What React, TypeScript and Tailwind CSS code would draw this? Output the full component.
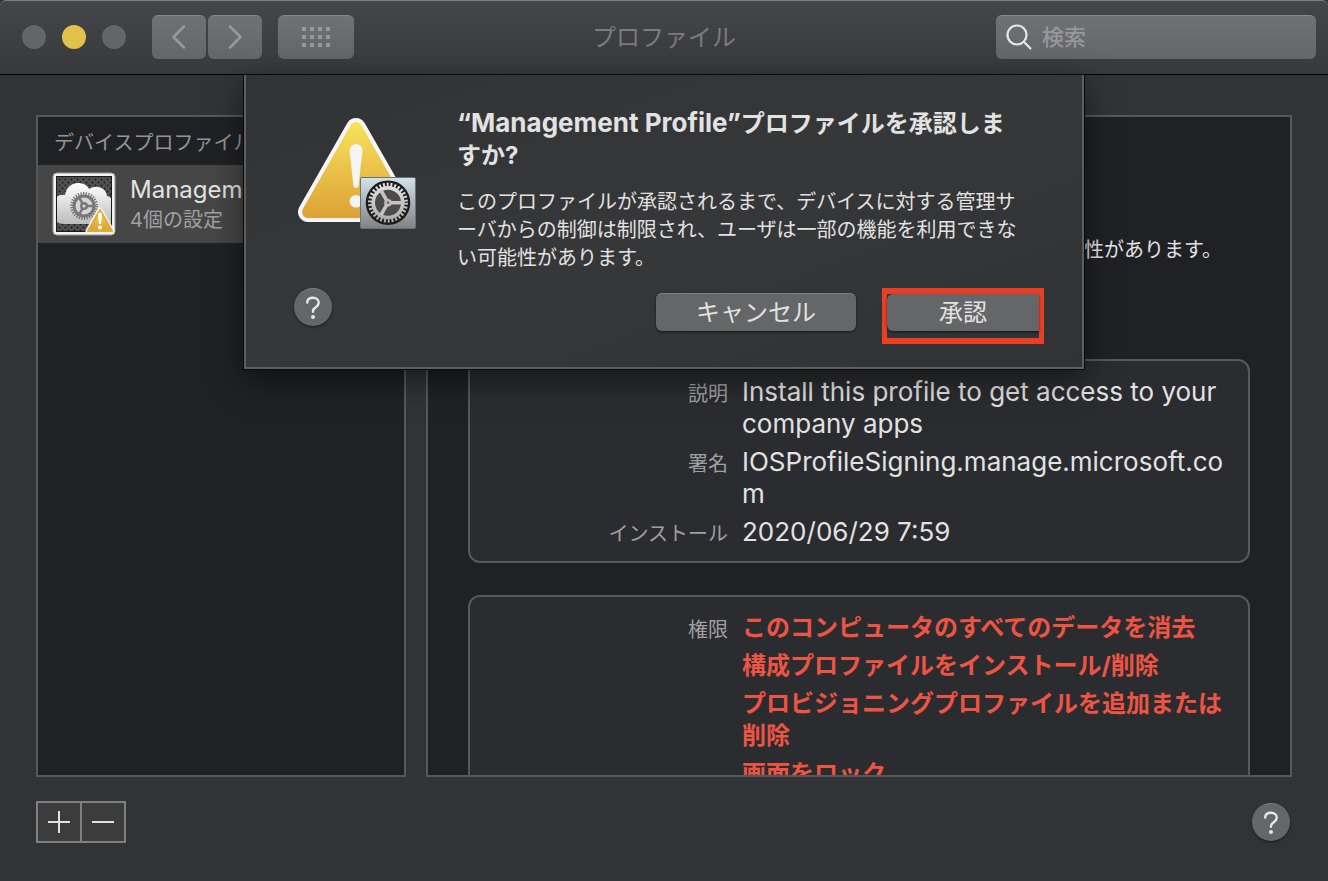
import { useState } from "react";

interface IDetailRow {
  label: string;
  value: string;
}

const profileInfo: IDetailRow[] = [
  { label: "説明", value: "Install this profile to get access to your company apps" },
  { label: "署名", value: "IOSProfileSigning.manage.microsoft.com" },
  { label: "インストール", value: "2020/06/29 7:59" },
];

const rights = [
  "このコンピュータのすべてのデータを消去",
  "構成プロファイルをインストール/削除",
  "プロビジョニングプロファイルを追加または削除",
  "画面をロック",
];

const toolButton =
  "flex h-11 items-center justify-center rounded-md border-t border-[#86888b] bg-gradient-to-b from-[#707175] to-[#656669] text-[#97989b]";

function NavButtons() {
  return (
    <div className="flex gap-4">
      <div className="flex gap-0.5">
        <button type="button" aria-label="戻る" className={`${toolButton} w-[54px]`}>
          <svg width="16" height="26" viewBox="0 0 16 26" fill="none" stroke="currentColor" strokeWidth="2.600" strokeLinecap="round" strokeLinejoin="round">
            <path d="M13 2.500 2.500 13 13 23.500" />
          </svg>
        </button>
        <button type="button" aria-label="進む" className={`${toolButton} w-[54px]`}>
          <svg width="16" height="26" viewBox="0 0 16 26" fill="none" stroke="currentColor" strokeWidth="2.600" strokeLinecap="round" strokeLinejoin="round">
            <path d="M3 2.500 13.500 13 3 23.500" />
          </svg>
        </button>
      </div>
      <button type="button" aria-label="すべてを表示" className={`${toolButton} w-[76px]`}>
        <svg width="28" height="20" viewBox="0 0 28 20" fill="currentColor">
          {[0, 8, 16].map((y) => [0, 8, 16, 24].map((x) => <rect key={`${x}-${y}`} x={x} y={y} width="4" height="4" />))}
        </svg>
      </button>
    </div>
  );
}

function HelpButton() {
  return (
    <button
      type="button"
      aria-label="ヘルプ"
      className="flex size-[38px] items-center justify-center rounded-full border-t border-[#7d7e80] bg-[#656668] text-[#e6e6e6] shadow-sm shadow-black/40"
    >
      <svg width="16" height="24" viewBox="0 0 16 24" fill="none" stroke="currentColor" strokeWidth="2.400" strokeLinecap="round">
        <path d="M2.200 6.600C2.300 3.700 4.600 1.800 8 1.800c3.400 0 5.700 1.900 5.700 4.800 0 2.300-1.200 3.500-3 4.700C8.800 12.500 8 13.400 8 15.200v.6" />
        <circle cx="8" cy="21" r="2" fill="currentColor" stroke="none" />
      </svg>
    </button>
  );
}

function ProfileIcon() {
  return (
    <svg width="64" height="64" viewBox="0 0 64 64" className="shrink-0">
      <defs>
        <linearGradient id="cloud" x1="0" y1="0" x2="0" y2="1">
          <stop offset="0" stopColor="#ffffff" />
          <stop offset="1" stopColor="#bdbdbd" />
        </linearGradient>
        <linearGradient id="smallWarn" x1="0" y1="0" x2="0" y2="1">
          <stop offset="0" stopColor="#f6d75a" />
          <stop offset="1" stopColor="#dba030" />
        </linearGradient>
        <pattern id="dots" width="6" height="6" patternUnits="userSpaceOnUse">
          <rect width="6" height="6" fill="#505050" />
          <circle cx="1.500" cy="1.500" r="1" fill="#1c1c1c" />
          <circle cx="4.500" cy="4.500" r="1" fill="#1c1c1c" />
        </pattern>
        <clipPath id="frame">
          <rect x="5" y="5" width="54" height="54" />
        </clipPath>
      </defs>
      <rect x="1" y="1" width="62" height="62" rx="4" fill="#f1f1f1" stroke="#9a9a9a" strokeWidth="1" />
      <rect x="4.500" y="4.500" width="55" height="55" fill="url(#dots)" stroke="#1a1a1a" strokeWidth="1" />
      <g clipPath="url(#frame)">
        <path
          d="M3 27c3-4 6-5 10-4 1-7 6-12 13-12 5 0 9 2 11 6 8-5 17-1 18 7 4 1 6 4 7 8v18c-3 2-7 2-10 2H12c-5 0-9-2-9-6z"
          fill="url(#cloud)"
        />
      </g>
      <circle cx="32" cy="34" r="12.500" fill="none" stroke="#777" strokeWidth="3" strokeDasharray="1.300 1.318" />
      <circle cx="32" cy="34" r="10" fill="#d5d5d5" stroke="#777" strokeWidth="3" />
      <path d="M32 34h10M32 34l-5-8.700M32 34l-5 8.700" stroke="#777" strokeWidth="2.500" />
      <circle cx="32" cy="34" r="4" fill="#777" />
      <circle cx="32" cy="34" r="1.500" fill="#ddd" />
      <path d="M48 38 36 59h24z" fill="#f3f3f3" stroke="#f3f3f3" strokeWidth="5" strokeLinejoin="round" />
      <path d="M48 38 36 59h24z" fill="url(#smallWarn)" stroke="#e0ab38" strokeWidth="2" strokeLinejoin="round" />
      <path d="M46 42.500a2 2 0 0 1 4 0l-1 9.500h-2z" fill="#fff" />
      <circle cx="48" cy="55.500" r="2" fill="#fff" />
    </svg>
  );
}

function WarningIcon() {
  return (
    <svg width="124" height="116" viewBox="0 0 124 116" className="shrink-0">
      <defs>
        <linearGradient id="warn" gradientUnits="userSpaceOnUse" x1="0" y1="6" x2="0" y2="102">
          <stop offset="0" stopColor="#f7e35c" />
          <stop offset="1" stopColor="#dca136" />
        </linearGradient>
        <linearGradient id="plate" x1="0" y1="0" x2="0" y2="1">
          <stop offset="0" stopColor="#d3e2ea" />
          <stop offset="1" stopColor="#7f8284" />
        </linearGradient>
        <linearGradient id="metal" gradientUnits="userSpaceOnUse" x1="0" y1="66" x2="0" y2="108">
          <stop offset="0" stopColor="#e4e4e0" />
          <stop offset="1" stopColor="#a9a8a4" />
        </linearGradient>
      </defs>
      <path d="M62 12 14 96h96z" fill="#f5f5f5" stroke="#f5f5f5" strokeWidth="20" strokeLinejoin="round" />
      <path d="M62 12 14 96h96z" fill="url(#warn)" stroke="url(#warn)" strokeWidth="12" strokeLinejoin="round" />
      <path d="M55.500 34.500a6.500 6.500 0 0 1 13 0L64.500 70q-.5 2-2.500 2t-2.500-2z" fill="#f5f5f5" />
      <circle cx="62" cy="85.300" r="6.300" fill="#f5f5f5" />
      <rect x="66.500" y="61.500" width="55" height="51" rx="1.500" fill="url(#plate)" stroke="#67747b" />
      <circle cx="94" cy="86.700" r="22.300" fill="#1b1b1c" />
      <circle cx="94" cy="86.700" r="18" fill="none" stroke="url(#metal)" strokeWidth="4" strokeDasharray="2 1.770" />
      <circle cx="94" cy="86.700" r="14.800" fill="#4b4b4d" stroke="url(#metal)" strokeWidth="3.600" />
      <path d="M94 86.700h14M94 86.700l-7-12.200M94 86.700l-7 12.200" stroke="#c4c3bf" strokeWidth="3.600" />
      <circle cx="94" cy="86.700" r="3.800" fill="#c4c3bf" />
      <circle cx="94" cy="86.700" r="1.400" fill="#6e6e6e" />
    </svg>
  );
}

function ApproveDialog({ onClose }: { onClose: () => void }) {
  return (
    <div
      role="dialog"
      aria-labelledby="dialog-title"
      className="absolute top-0 left-1/2 z-10 w-[840px] -translate-x-1/2 border-2 border-t-0 border-[#5d5e5f] bg-gradient-to-br from-[#323334] via-[#363738] to-[#313233] pt-[33px] pr-[38px] pb-[23px] pl-12 shadow-[0_0_0_1px_#0a0a0a,0_10px_30px_rgba(0,0,0,0.5)]"
    >
      <div className="flex justify-between gap-9">
        <div className="pt-2">
          <WarningIcon />
        </div>
        <div className="w-[587px] pr-5 break-all">
          <h2 id="dialog-title" className="text-2xl leading-8 font-bold">
            <span className="text-[26px] leading-none">“Management Profile”</span>プロファイルを承認しますか?
          </h2>
          <p className="mt-4 text-xl leading-7">
            このプロファイルが承認されるまで、デバイスに対する管理サーバからの制御は制限され、ユーザは一部の機能を利用できない可能性があります。
          </p>
        </div>
      </div>
      <div className="mt-4 flex items-start">
        <HelpButton />
        <button
          type="button"
          onClick={onClose}
          className="mt-[5px] ml-auto h-[38px] w-[200px] rounded-md border-t border-[#808183] bg-[#656668] text-2xl leading-8 shadow-sm shadow-black/50"
        >
          キャンセル
        </button>
        <div className="ml-[26px] h-14 w-[162px] border-x-[5px] border-y-[6px] border-[#ea3f25]">
          <button
            type="button"
            onClick={onClose}
            className="h-[37px] w-full rounded-l-md bg-[#656668] text-2xl leading-8 shadow-sm shadow-black/50"
          >
            承認
          </button>
        </div>
      </div>
    </div>
  );
}

export default function App() {
  const [open, setOpen] = useState(true);
  const [keyword, setKeyword] = useState("");

  return (
    <div className="flex h-screen flex-col overflow-hidden bg-[#323337] font-['Inter','Noto_Sans_CJK_JP',sans-serif] text-[#e2e2e2]">
      <header className="flex h-[75px] shrink-0 items-center rounded-t-md border-t border-b border-t-[#7b7d80] border-b-black bg-gradient-to-b from-[#45464a] to-[#37393a] px-3 pb-0.5">
        <div className="flex flex-1 items-center gap-[26px]">
          <div className="flex gap-4 pl-2.5">
            <button type="button" aria-label="閉じる" className="size-6 rounded-full bg-[#646567]" />
            <button type="button" aria-label="しまう" className="size-6 rounded-full bg-[#e2c04c]" />
            <button type="button" aria-label="拡大" className="size-6 rounded-full bg-[#646567]" />
          </div>
          <NavButtons />
        </div>
        <h1 className="pt-0.5 text-2xl text-[#7b7c7e]">プロファイル</h1>
        <div className="flex flex-1 justify-end">
          <label className="flex h-11 w-80 items-center gap-2.5 rounded-md border-t border-[#86888b] bg-gradient-to-b from-[#707175] to-[#656669] px-2.5">
            <svg width="26" height="26" viewBox="0 0 26 26" fill="none" stroke="#e8e8e8" strokeWidth="2.200">
              <circle cx="11" cy="11" r="9.500" />
              <path d="m17.800 17.800 7.200 7.200" />
            </svg>
            <input
              type="search"
              aria-label="検索"
              placeholder="検索"
              value={keyword}
              onChange={(e) => setKeyword(e.target.value)}
              className="min-w-0 flex-1 bg-transparent text-[22px] leading-8 font-medium outline-none placeholder:text-[#97989b]"
            />
          </label>
        </div>
      </header>

      <main className="relative flex min-h-0 flex-1 flex-col px-9 pt-10 pb-[38px]">
        <div className="flex min-h-0 flex-1 gap-5">
          <aside className="w-[370px] shrink-0 overflow-hidden border-2 border-[#575859] bg-[#202125]">
            <h2 className="px-4 pt-3 pb-2 text-xl leading-7 text-[#949596]">デバイスプロファイル</h2>
            <div className="flex h-[78px] items-center gap-3.5 bg-[#464646] px-3.5">
              <ProfileIcon />
              <div>
                <p className="text-2xl leading-8 whitespace-nowrap">Management Profile</p>
                <p className="text-xl leading-7 text-[#a0a0a0]">4個の設定</p>
              </div>
            </div>
          </aside>

          <section className="min-w-0 flex-1 overflow-hidden border-2 border-[#575859] bg-[#202125] px-10">
            <p className="h-[242px] pt-[119px] pr-7 text-right text-xl leading-7">性があります。</p>
            <dl className="grid grid-cols-[258px_1fr] gap-x-3.5 gap-y-1.5 rounded-xl border-2 border-[#57585a] bg-[#2b2c2f] pt-[15px] pr-[22px] pb-[11px]">
              {profileInfo.map((row) => (
                <div key={row.label} className="contents">
                  <dt className="pt-0.5 text-right text-xl leading-8 text-[#a0a0a1]">{row.label}</dt>
                  <dd className="text-[26px] leading-8 wrap-anywhere">{row.value}</dd>
                </div>
              ))}
            </dl>
            <dl className="mt-8 grid grid-cols-[258px_1fr] gap-x-3.5 rounded-xl border-2 border-[#57585a] bg-[#2b2c2f] pt-[15px] pr-[22px] pb-[11px]">
              <dt className="pt-0.5 text-right text-xl leading-8 text-[#a0a0a1]">権限</dt>
              <dd className="flex flex-col gap-1.5 text-2xl leading-8 font-bold text-[#ee5444]">
                {rights.map((text) => (
                  <span key={text}>{text}</span>
                ))}
              </dd>
            </dl>
          </section>
        </div>

        <div className="mt-6 flex items-center justify-between">
          <div className="flex border-2 border-[#7f8080] bg-[#3c3c3c]">
            <button type="button" aria-label="追加" className="flex h-[38px] w-11 items-center justify-center border-r-2 border-[#7f8080]">
              <svg width="22" height="22" viewBox="0 0 22 22" stroke="#e2e2e2" strokeWidth="2">
                <path d="M11 0v22M0 11h22" />
              </svg>
            </button>
            <button type="button" aria-label="削除" className="flex h-[38px] w-[42px] items-center justify-center">
              <svg width="22" height="22" viewBox="0 0 22 22" stroke="#e2e2e2" strokeWidth="2">
                <path d="M0 11h22" />
              </svg>
            </button>
          </div>
          <div className="mr-0.5">
            <HelpButton />
          </div>
        </div>

        {open && <ApproveDialog onClose={() => setOpen(false)} />}
      </main>
    </div>
  );
}
